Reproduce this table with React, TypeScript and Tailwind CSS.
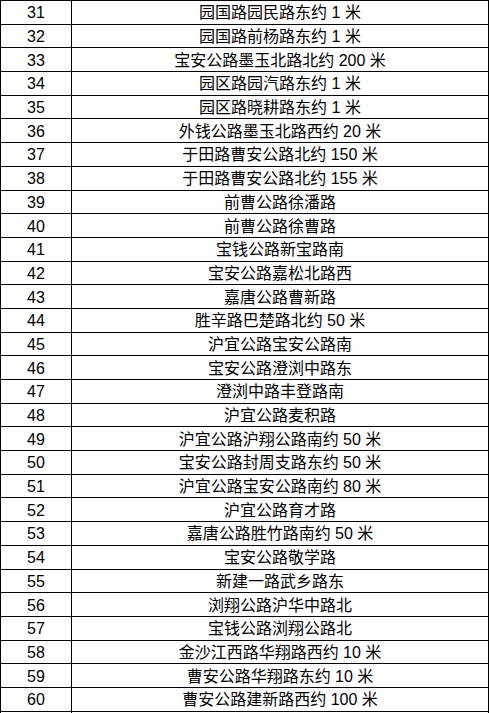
import React from "react";

const rows: [number, string][] = [
  [31, "园国路园民路东约 1 米"],
  [32, "园国路前杨路东约 1 米"],
  [33, "宝安公路墨玉北路北约 200 米"],
  [34, "园区路园汽路东约 1 米"],
  [35, "园区路晓耕路东约 1 米"],
  [36, "外钱公路墨玉北路西约 20 米"],
  [37, "于田路曹安公路北约 150 米"],
  [38, "于田路曹安公路北约 155 米"],
  [39, "前曹公路徐潘路"],
  [40, "前曹公路徐曹路"],
  [41, "宝钱公路新宝路南"],
  [42, "宝安公路嘉松北路西"],
  [43, "嘉唐公路曹新路"],
  [44, "胜辛路巴楚路北约 50 米"],
  [45, "沪宜公路宝安公路南"],
  [46, "宝安公路澄浏中路东"],
  [47, "澄浏中路丰登路南"],
  [48, "沪宜公路麦积路"],
  [49, "沪宜公路沪翔公路南约 50 米"],
  [50, "宝安公路封周支路东约 50 米"],
  [51, "沪宜公路宝安公路南约 80 米"],
  [52, "沪宜公路育才路"],
  [53, "嘉唐公路胜竹路南约 50 米"],
  [54, "宝安公路敬学路"],
  [55, "新建一路武乡路东"],
  [56, "浏翔公路沪华中路北"],
  [57, "宝钱公路浏翔公路北"],
  [58, "金沙江西路华翔路西约 10 米"],
  [59, "曹安公路华翔路东约 10 米"],
  [60, "曹安公路建新路西约 100 米"],
];

const App: React.FC = () => {
  return (
    <div className="bg-white w-[490px] h-[713px] overflow-hidden">
      <div className="w-[489px] border-l border-t border-black text-black text-[16px] leading-none font-['Liberation_Sans','Noto_Sans_CJK_SC',sans-serif]">
        {rows.map(([no, place]) => (
          <div key={no} className="grid grid-cols-[71px_417px] h-[23.7px]">
            <div className="flex items-center justify-center border-r border-b border-black pt-[2px]">
              {no}
            </div>
            <div className="flex items-center justify-center border-r border-b border-black pt-[2px]">
              {place}
            </div>
          </div>
        ))}
        <div className="grid grid-cols-[71px_417px] h-[23.7px]">
          <div className="border-r border-b border-black" />
          <div className="border-r border-b border-black" />
        </div>
      </div>
    </div>
  );
};

export default App;
